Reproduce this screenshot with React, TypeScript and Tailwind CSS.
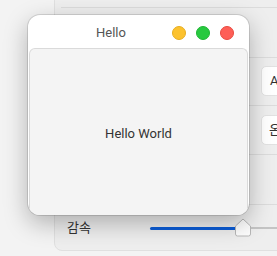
import React from "react";

export default function App() {
  const font = { fontFamily: 'Roboto, "Noto Sans CJK KR", sans-serif' };
  return (
    <div className="relative w-[277px] h-[256px] overflow-hidden bg-[#f3f3f3]" style={font}>
      {/* background settings card */}
      <div className="absolute left-[54px] top-[-43px] w-[260px] h-[294px] rounded-bl-[8px] border border-[#e0e0e0] bg-[#eeeeee] flex flex-col">
        <div className="h-[50px] ml-[6px] border-b border-[#dcdcdc]" />
        <div className="h-[50px] ml-[6px] border-b border-[#dcdcdc]" />
        <div className="h-[48px] ml-[6px] border-b border-[#dcdcdc] flex items-center pl-[200px] pb-[1px]">
          <div className="w-[40px] h-[30px] shrink-0 rounded-[5px] bg-white border border-[#e2e2e2] flex items-center pl-[8px] text-[13px] text-[#333]">A</div>
        </div>
        <div className="h-[49px] ml-[6px] border-b border-[#dcdcdc] flex items-center pl-[200px] pb-[1px]">
          <div className="w-[40px] h-[30px] shrink-0 rounded-[5px] bg-white border border-[#e2e2e2] flex items-center pl-[7px] text-[13px] text-[#333]">온</div>
        </div>
        <div className="h-[50px] ml-[6px] border-b border-[#dcdcdc]" />
        <div className="flex-1 flex items-center pl-[12px] pt-[1px]">
          <span className="text-[13px] text-[#333] w-[83px]">감속</span>
          <div className="relative flex-1 h-[20px] flex items-center">
            <div className="w-[86px] h-[3px] bg-[#0b5cd6] rounded-l" />
            <div className="flex-1 h-[2px] bg-[#c4c4c4]" />
            <svg className="absolute left-[84px] top-[0px]" width="18" height="19" viewBox="0 0 18 19">
              <path d="M9 1 L16.5 8 L16.5 16 Q16.5 18 14.5 18 L3.5 18 Q1.5 18 1.5 16 L1.5 8 Z" fill="#fdfdfd" stroke="#b8b8b8" strokeWidth="1" />
            </svg>
          </div>
        </div>
      </div>

      {/* window */}
      <div className="absolute left-[28px] top-[15px] w-[221px] h-[200px] rounded-[12px] bg-white shadow-[0_8px_24px_rgba(0,0,0,0.28),0_0_0_1px_rgba(0,0,0,0.12)] flex flex-col overflow-hidden">
        <div className="h-[33px] flex items-center pt-[2px]">
          <div className="flex-1 pl-[68px] text-[13px] text-[#555]">Hello</div>
          <div className="flex items-center gap-[10px] pr-[15px]">
            <span className="w-[14px] h-[14px] rounded-full bg-[#fcc22e] border border-[#e6ad20]" />
            <span className="w-[14px] h-[14px] rounded-full bg-[#27c93f] border border-[#1eb533]" />
            <span className="w-[14px] h-[14px] rounded-full bg-[#fe5f57] border border-[#e8493f]" />
          </div>
        </div>
        <div className="flex-1 mx-[1px] rounded-t-[6px] border-t border-x border-[#dadada] bg-[#f4f4f4] flex items-center justify-center pt-[3px]">
          <span className="text-[13px] text-[#333]">Hello World</span>
        </div>
      </div>
    </div>
  );
}
